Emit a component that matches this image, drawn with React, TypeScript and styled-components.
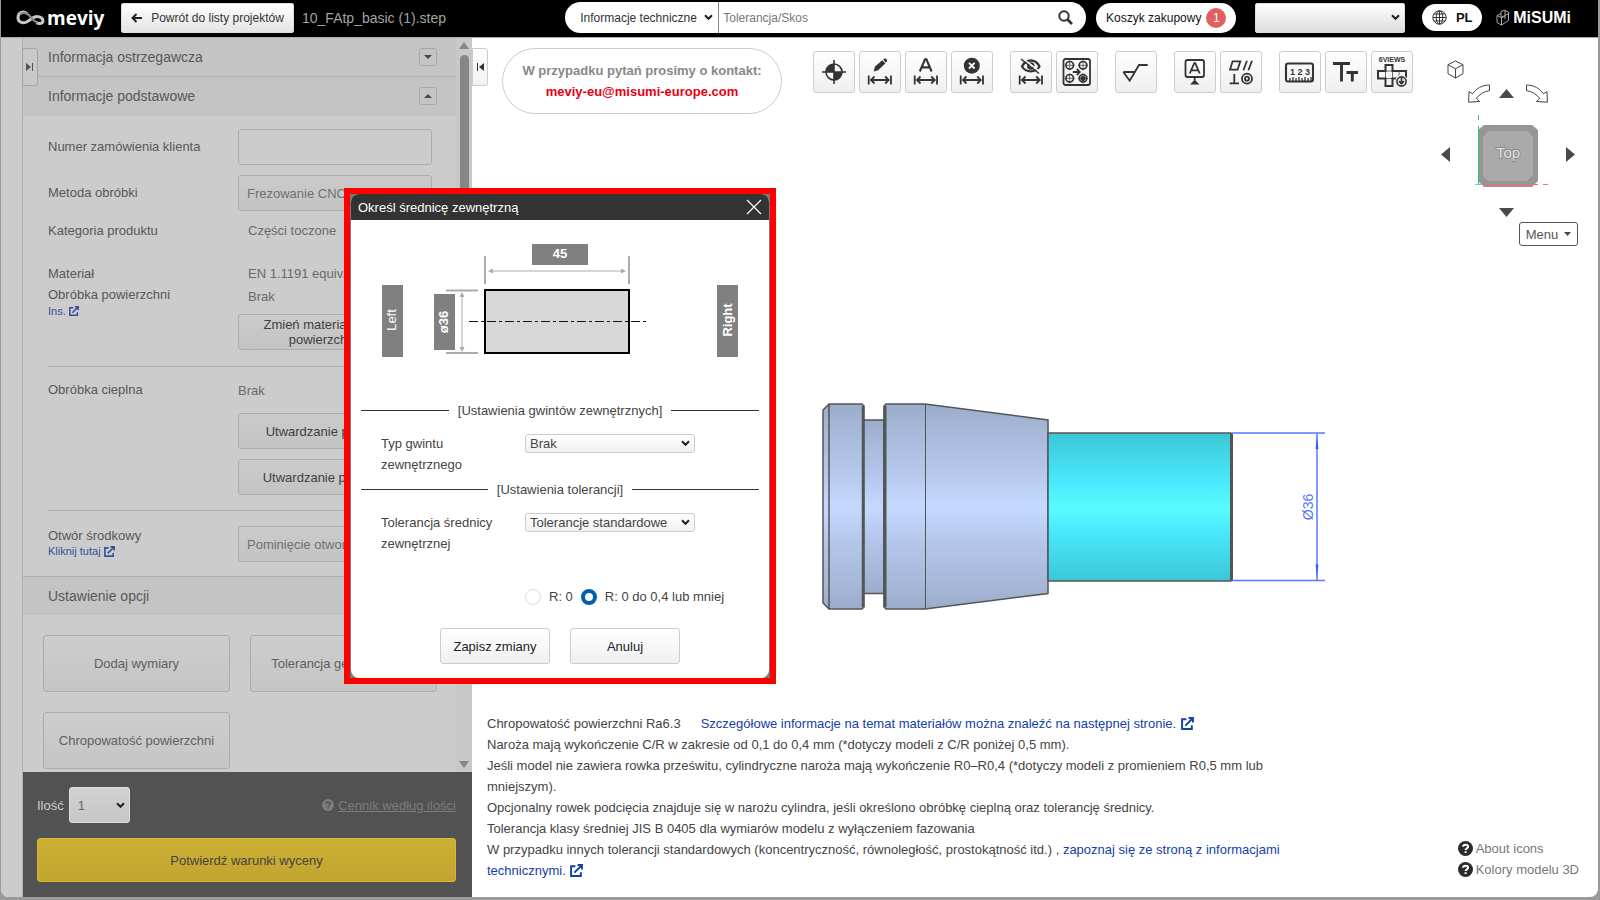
import React from "react";
import styled, { createGlobalStyle, css } from "styled-components";

const Global = createGlobalStyle`
  * { box-sizing: border-box; }
  html, body { margin: 0; padding: 0; }
  body { background: #8e8e8e; font-family: "Liberation Sans", Arial, sans-serif; font-size: 13px; color: #333; }
  button, input, select { font: inherit; color: inherit; margin: 0; }
  p { margin: 0; }
  svg { display: block; flex: none; }
`;

/* ---------- shell ---------- */

const Shell = styled.div`
  position: relative;
  display: flex;
  flex-direction: column;
  height: 100vh;
  padding: 0 2px 3px 1px;
  background: #9a9a9a;
  overflow: hidden;
`;

const Header = styled.header`
  display: flex;
  align-items: center;
  flex: none;
  height: 38px;
  padding: 0 27px 2px 15px;
  background: #000;
  border-bottom: 1px solid #aaa;
`;

const Body = styled.div`
  display: flex;
  flex: 1;
  min-height: 0;
  background: #fff;
  border-radius: 0 0 8px 8px;
  overflow: hidden;
`;

/* ---------- header parts ---------- */

const Brand = styled.a`
  display: flex;
  align-items: center;
  gap: 2px;
  width: 90px;
  color: #fff;
  font: bold 19px/24px "Open Sans", "Noto Sans", sans-serif;
  text-decoration: none;
`;

const BackButton = styled.button`
  display: flex;
  align-items: center;
  justify-content: center;
  gap: 9px;
  width: 173px;
  height: 30px;
  margin-left: 15px;
  padding: 0;
  border: 1px solid #ddd;
  border-radius: 2px;
  background: linear-gradient(#fff, #e4e4e4);
  font-size: 12px;
`;

const FileName = styled.span`
  flex: 1;
  margin-left: 8px;
  color: #a2a2a2;
  font-size: 14px;
`;

const SearchBar = styled.form`
  display: flex;
  align-items: center;
  width: 521px;
  height: 31px;
  border-radius: 16px;
  background: #fff;
  overflow: hidden;
  font-size: 12px;
`;

const SearchInput = styled.input`
  flex: 1;
  min-width: 0;
  height: 31px;
  padding: 0 4px;
  border: 0;
  border-left: 1px solid #888;
  outline: 0;
  background: none;
  &::placeholder { color: #777; opacity: 1; }
`;

const PlainButton = styled.button`
  display: flex;
  align-items: center;
  justify-content: center;
  padding: 0;
  border: 0;
  background: none;
`;

const SearchButton = styled(PlainButton)`
  width: 42px;
  height: 31px;
`;

const CartButton = styled(PlainButton)`
  gap: 5px;
  width: 140px;
  height: 30px;
  margin-left: 10px;
  border-radius: 15px;
  background: #fff;
  color: #111;
  font-size: 12px;
`;

const CountBadge = styled.span`
  width: 20px;
  height: 20px;
  border-radius: 10px;
  background: #e06060;
  color: #fff;
  line-height: 20px;
`;

const AccountSlot = styled.div`
  display: flex;
  margin-left: 19px;
`;

const LangButton = styled(PlainButton)`
  gap: 9px;
  width: 60px;
  height: 27px;
  margin-left: 17px;
  border-radius: 14px;
  background: #fff;
  color: #111;
  font-weight: bold;
`;

const Misumi = styled.a`
  display: flex;
  align-items: center;
  gap: 3px;
  margin-left: 14px;
  color: #fff;
  font-size: 16px;
  font-weight: 900;
  text-decoration: none;
`;

/* ---------- select ---------- */

type Look = "pill" | "top" | "side" | "qty" | "dialog";

const looks = {
  pill: css`width: 153px; height: 31px; padding: 0 15px; border: 0; background: transparent; font-size: 12px;`,
  top: css`width: 150px; height: 30px; border: 1px solid #ddd; border-radius: 2px; background: linear-gradient(#fff, #dcdcdc);`,
  side: css`width: 194px; height: 36px; padding: 0 8px; border: 1px solid #adadad; border-radius: 3px; background: linear-gradient(#cbcbcb, #c3c3c3); color: #707070;`,
  qty: css`width: 61px; height: 36px; padding: 0 8px; border: 1px solid #ddd; border-radius: 3px; background: linear-gradient(#d2d2d2, #c6c6c6); color: #666;`,
  dialog: css`width: 170px; height: 19px; padding: 0 4px; border: 1px solid #ccc; border-radius: 3px; background: linear-gradient(#fff, #f0f0f0); color: #444;`,
};

const SelectWrap = styled.span`
  display: inline-grid;
  align-items: center;
  > * { grid-area: 1 / 1; }
  > svg { justify-self: end; margin-right: 5px; pointer-events: none; }
`;

const SelectBox = styled.select<{ $look: Look }>`
  appearance: none;
  outline: 0;
  ${(p) => looks[p.$look]}
`;

function Select({ look, label, id, options }: { look: Look; label?: string; id?: string; options: string[] }) {
  return (
    <SelectWrap>
      <SelectBox $look={look} aria-label={label} id={id}>
        {options.map((o) => (
          <option key={o}>{o}</option>
        ))}
      </SelectBox>
      <svg width="9" height="7" viewBox="0 0 9 7" fill="none" stroke="#222" strokeWidth="2">
        <path d="M1 1.200 4.500 4.800 8 1.200" />
      </svg>
    </SelectWrap>
  );
}

/* ---------- sidebar ---------- */

const Sidebar = styled.aside`
  display: flex;
  flex: none;
  width: 471px;
  padding-left: 21px;
  background: #ccc;
  color: #585858;
`;

const SidePanel = styled.div`
  position: relative;
  display: flex;
  flex-direction: column;
  flex: 1;
  min-width: 0;
  border-left: 1px solid #b0b0b0;
`;

const SideScroll = styled.div`
  display: flex;
  flex: 1;
  min-height: 0;
  overflow: hidden;
`;

const SideContent = styled.div`
  flex: 1;
  min-width: 0;
`;

const Track = styled.div`
  display: flex;
  flex-direction: column;
  align-items: center;
  justify-content: space-between;
  flex: none;
  width: 16px;
  padding: 4px 0;
  background: #c8c8c8;
`;

const Thumb = styled.div`
  flex: 1;
  width: 9px;
  margin: 6px 0 170px;
  border-radius: 5px;
  background: #868686;
`;

const SectionHead = styled.h2`
  display: flex;
  align-items: center;
  justify-content: space-between;
  height: 39px;
  margin: 0;
  padding: 0 19px 0 25px;
  border-bottom: 1px solid #adadad;
  background: #c4c4c4;
  font-size: 14px;
  font-weight: normal;
  & + & { border-bottom-color: #c4c4c4; }
`;

const ToggleButton = styled(PlainButton)`
  width: 18px;
  height: 18px;
  border: 1px solid #a8a8a8;
  border-radius: 3px;
`;

const Handle = styled(PlainButton)<{ $side: "left" | "right" }>`
  position: absolute;
  top: 10px;
  left: ${(p) => (p.$side === "left" ? "-1px" : "0")};
  width: 16px;
  height: 38px;
  border: 1px solid ${(p) => (p.$side === "left" ? "#a4a4a4" : "#ccc")};
  border-radius: 0 3px 3px 0;
  background: ${(p) => (p.$side === "left" ? "#c8c8c8" : "linear-gradient(#fff, #f2f2f2)")};
`;

const Fields = styled.div<{ $top: number; $bottom: number }>`
  display: grid;
  grid-template-columns: 190px 194px;
  align-items: start;
  margin-left: 25px;
  padding: ${(p) => p.$top}px 0 ${(p) => p.$bottom}px;
  & + & { border-top: 1px solid #adadad; width: 384px; }
`;

const FieldLabel = styled.label<{ $h?: number }>`
  line-height: ${(p) => p.$h ?? 21}px;
`;

const FieldValue = styled.div<{ $h?: number; $indent?: boolean }>`
  padding-left: ${(p) => (p.$indent ? 10 : 0)}px;
  line-height: ${(p) => p.$h ?? 22}px;
  color: #6a6a6a;
  white-space: nowrap;
`;

const FieldName = styled.div<{ $h?: number }>`
  line-height: ${(p) => p.$h ?? 21}px;
`;

const OrderInput = styled.input`
  width: 194px;
  height: 36px;
  margin-bottom: 10px;
  border: 1px solid #adadad;
  border-radius: 3px;
  background: transparent;
`;

const SmallLink = styled.a`
  display: flex;
  align-items: center;
  gap: 3px;
  height: 12px;
  color: #34509a;
  font-size: 11px;
  text-decoration: none;
`;

const SideButton = styled.button`
  width: 194px;
  height: 36px;
  padding: 0;
  border: 1px solid #adadad;
  border-radius: 3px;
  background: linear-gradient(#cbcbcb, #c3c3c3);
  color: #404040;
  line-height: 15px;
`;

const Stack = styled.div<{ $gap?: number }>`
  display: flex;
  flex-direction: column;
  gap: ${(p) => p.$gap ?? 0}px;
`;

const Spacer = styled.div<{ $h: number }>`
  height: ${(p) => p.$h}px;
`;

const OptionsHead = styled(SectionHead)`
  border-top: 1px solid #adadad;
  border-bottom: 0;
`;

const OptionGrid = styled.div`
  display: grid;
  grid-template-columns: 187px 187px;
  gap: 20px;
  padding: 20px 0 0 20px;
`;

const OptionButton = styled.button`
  height: 57px;
  padding: 0;
  border: 1px solid #adadad;
  border-radius: 3px;
  background: linear-gradient(#cdcdcd, #c5c5c5);
  color: #606060;
`;

const SideFooter = styled.div`
  flex: none;
  height: 125px;
  padding: 15px 16px 0 14px;
  background: #525252;
`;

const QtyRow = styled.div`
  display: flex;
  align-items: center;
  gap: 5px;
  margin-bottom: 15px;
  color: #ccc;
`;

const PriceLink = styled.a`
  display: flex;
  align-items: center;
  gap: 4px;
  margin-left: auto;
  color: #7c7c7c;
  text-decoration: none;
  span { text-decoration: underline; }
`;

const QuoteButton = styled.button`
  width: 100%;
  height: 44px;
  border: 1px solid #d8b931;
  border-radius: 3px;
  background: linear-gradient(#ccb033, #c2a431);
  color: #444;
`;

/* ---------- viewer ---------- */

const Viewer = styled.main`
  position: relative;
  display: flex;
  flex-direction: column;
  flex: 1;
  min-width: 0;
`;

const TopRow = styled.div`
  display: flex;
  align-items: flex-start;
  padding: 10px 20px 0 30px;
`;

const Contact = styled.div`
  width: 280px;
  height: 66px;
  padding-top: 11px;
  border: 1px solid #ccc;
  border-radius: 33px;
  color: #888;
  font-weight: bold;
  line-height: 21px;
  text-align: center;
  a { color: #e60012; text-decoration: none; }
`;

const Toolbar = styled.div`
  display: flex;
  gap: 17px;
  margin: 3px 0 0 31px;
`;

const ToolGroup = styled.div`
  display: flex;
  gap: 4px;
`;

const ToolButton = styled(PlainButton)`
  width: 42px;
  height: 42px;
  border: 1px solid #ccc;
  border-radius: 3px;
  background: linear-gradient(#fff, #efefef);
`;

const ViewNav = styled.div`
  display: flex;
  flex-direction: column;
  align-items: flex-start;
  width: 137px;
  margin: 12px 0 0 auto;
`;

const HomeView = styled(PlainButton)`
  margin: 0 0 5px 6px;
`;

const RotateRow = styled.div`
  display: flex;
  align-items: center;
  justify-content: space-between;
  width: 80px;
  margin: 0 0 12px 27px;
  > :nth-child(2) { margin-right: 3px; }
`;

const CubeRow = styled.div`
  display: flex;
  align-items: center;
  justify-content: space-between;
  width: 134px;
  margin-bottom: 15px;
  > :nth-child(2) { margin-left: 8px; }
`;

const DownButton = styled(PlainButton)`
  margin: 0 0 5px 58px;
`;

const MenuButton = styled(PlainButton)`
  align-self: flex-end;
  gap: 6px;
  width: 59px;
  height: 24px;
  border: 1px solid #555;
  border-radius: 3px;
  background: #fff;
  color: #555;
`;

const Stage = styled.div`
  display: flex;
  flex: 1;
  min-height: 0;
  align-items: flex-start;
  padding: 156px 0 0 349px;
`;

const BottomRow = styled.div`
  display: flex;
  align-items: flex-end;
  justify-content: space-between;
  padding: 0 19px 16px 15px;
`;

const Notes = styled.div`
  width: 800px;
  color: #444;
  line-height: 21px;
  a { color: #1440a8; text-decoration: none; }
  a svg { display: inline-block; margin-left: 1px; vertical-align: -2px; }
`;

const RoughLink = styled.a`
  margin-left: 20px;
`;

const HelpList = styled.div`
  display: flex;
  flex-direction: column;
  margin-bottom: 1px;
  a {
    display: flex;
    align-items: center;
    gap: 3px;
    height: 21px;
    color: #777;
    text-decoration: none;
  }
`;

/* ---------- dialog ---------- */

const DialogFrame = styled.section`
  position: absolute;
  top: 188px;
  left: 344px;
  width: 432px;
  border: 6px solid #f00;
  background: #777;
`;

const DialogCard = styled.div`
  margin: 0 1px;
  border-radius: 8px;
  background: #fff;
  overflow: hidden;
`;

const DialogTitle = styled.div`
  display: flex;
  align-items: center;
  justify-content: space-between;
  height: 26px;
  padding: 0 7px;
  background: #333;
  color: #fff;
`;

const DialogBody = styled.div`
  padding: 24px 10px 14px;
  color: #444;
`;

const Diagram = styled.div`
  padding: 0 0 42px 21px;
`;

const Divider = styled.div`
  display: flex;
  align-items: center;
  gap: 9px;
  height: 21px;
  &::before, &::after { content: ""; flex: 1; height: 1px; background: #333; }
`;

const DialogField = styled.div`
  display: grid;
  grid-template-columns: 144px 170px;
  align-items: start;
  padding: 12px 0 4px 20px;
  label { width: 120px; line-height: 21px; }
  > span { margin-top: 1px; }
`;

const RadioRow = styled.div`
  display: flex;
  align-items: center;
  gap: 8px;
  height: 21px;
  margin: 28px 0 21px 164px;
  white-space: nowrap;
  label { display: flex; align-items: center; gap: 8px; }
`;

const Radio = styled.input`
  appearance: none;
  width: 16px;
  height: 16px;
  border: 1px solid #ddd;
  border-radius: 50%;
  background: #fff;
  &:checked { border: 4px solid #0060b0; }
`;

const Actions = styled.div`
  display: flex;
  justify-content: center;
  gap: 20px;
`;

const ActionButton = styled.button`
  width: 110px;
  height: 36px;
  padding: 0;
  border: 1px solid #ccc;
  border-radius: 3px;
  background: linear-gradient(#fff, #f0f0f0);
  color: #222;
`;

/* ---------- small icons ---------- */

const ExtLink = ({ size = 12 }: { size?: number }) => (
  <svg width={size} height={size} viewBox="0 0 12 12" fill="none" stroke="currentColor" strokeWidth="1.800">
    <path d="M5 2H1v9h9V7.500M4 8l6.400-6.400M7 1h4v4" />
  </svg>
);

const Help = ({ color, mark, size = 14 }: { color: string; mark: string; size?: number }) => (
  <svg width={size} height={size} viewBox="0 0 14 14">
    <circle cx="7" cy="7" r="7" fill={color} />
    <path d="M4.800 5.400c0-2.600 4.600-2.600 4.600-.1C9.400 6.900 7.100 6.700 7.100 8.400M7.100 9.600v1.600" fill="none" stroke={mark} strokeWidth="1.900" />
  </svg>
);

const Tri = ({ dir, w, h, color = "#4a4a4a" }: { dir: "up" | "down" | "left" | "right"; w: number; h: number; color?: string }) => {
  const pts = {
    up: `0,${h} ${w},${h} ${w / 2},0`,
    down: `0,0 ${w},0 ${w / 2},${h}`,
    left: `${w},0 ${w},${h} 0,${h / 2}`,
    right: `0,0 0,${h} ${w},${h / 2}`,
  }[dir];
  return (
    <svg width={w} height={h}>
      <polygon points={pts} fill={color} />
    </svg>
  );
};

/* ---------- toolbar icons ---------- */

const DimArrow = () => (
  <path d="M9.700 24.500v9M32 24.500v9M11.500 29h19M15.500 25.500 12 29l3.500 3.500M26.200 25.500 29.700 29l-3.500 3.500" />
);

const toolIcons: { name: string; art: React.ReactNode }[][] = [
  [
    {
      name: "Punkt bazowy",
      art: (
        <>
          <circle cx="21" cy="21" r="8" strokeWidth="1.600" />
          <path d="M21 21V13a8 8 0 0 0-8 8zM21 21v8a8 8 0 0 0 8-8z" fill="#333" stroke="none" />
          <path d="M9 21h24M21 9v24" strokeWidth="1.600" />
        </>
      ),
    },
    {
      name: "Edytuj wymiar",
      art: (
        <>
          <path d="M14.700 20.600l1.300-5 7.300-6.300 3 3.300-7.200 6.600zM24.300 8.500l1.600-1.200q2.400.6 2 3.200l-1.200 1.200z" fill="#333" stroke="none" />
          <DimArrow />
        </>
      ),
    },
    {
      name: "Wymiar automatyczny",
      art: (
        <>
          <path d="M14.800 20.500 20 8.300h1.400l5.200 12.200M16.600 16.400h8" strokeWidth="2.100" />
          <DimArrow />
        </>
      ),
    },
    {
      name: "Usuń wymiar",
      art: (
        <>
          <circle cx="20.800" cy="14.700" r="8" fill="#333" stroke="none" />
          <path d="M18 11.900l5.600 5.600M23.600 11.900 18 17.500" stroke="#fff" />
          <DimArrow />
        </>
      ),
    },
  ],
  [
    {
      name: "Ukryj wymiary",
      art: (
        <>
          <path d="M12 15.500c4-8 13.500-8 17.500 0-4 6.500-13.500 6.500-17.500 0z" strokeWidth="2.300" />
          <circle cx="20.800" cy="15" r="2.600" strokeWidth="2.300" />
          <path d="M12.800 7.400l17.500 13.800" stroke="#f8f8f8" strokeWidth="1.500" />
          <path d="M11 8l18 14.500" strokeWidth="1.500" />
          <DimArrow />
        </>
      ),
    },
    {
      name: "Grupuj otwory",
      art: (
        <>
          <rect x="7.500" y="8" width="26.500" height="26" rx="2" />
          {[[13.7, 14.3], [27, 14.3], [13.7, 27.3], [27, 27.3]].map(([x, y]) => (
            <g key={`${x}-${y}`} strokeWidth="1.700">
              <circle cx={x} cy={y} r="3.800" />
              <path d={`M${x - 5} ${y}h10M${x} ${y - 5}v10`} strokeWidth=".7" />
            </g>
          ))}
          <circle cx="27" cy="27.300" r="1.700" fill="#333" />
          <path d="M16.800 21h6.500M20.800 18l3 3-3 3" />
        </>
      ),
    },
  ],
  [{ name: "Chropowatość", art: <path d="M8.300 21h12.400M8.300 21l6.400 8.700L24 14h8.700" /> }],
  [
    {
      name: "Baza",
      art: (
        <>
          <rect x="11.500" y="9" width="18.500" height="17" rx="2" />
          <path d="M15.800 22.500l4.400-10.300h1.100l4.400 10.300M17.300 19.300h7M20.700 26v4" />
          <path d="M16 33.500l3.500-3.500h2.500l3.500 3.500z" fill="#333" stroke="none" />
        </>
      ),
    },
    {
      name: "Tolerancja geometryczna",
      art: (
        <>
          <path d="M12.600 10.300h7.700l-2.700 8.400H10zM27 9.700l-3.600 9.600M32 9.700l-3.600 9.600M14.300 23v9.300M9.700 32.300h9.300" />
          <circle cx="27" cy="27.700" r="5" />
          <circle cx="27" cy="27.700" r="2" />
        </>
      ),
    },
  ],
  [
    {
      name: "Pomiar",
      art: (
        <>
          <rect x="7" y="12.500" width="27" height="18" rx="2" strokeWidth="2.100" />
          <path d="M11 30v-3M14 30v-4M17 30v-3M20 30v-4M23 30v-3M26 30v-4M29 30v-3M32 30v-4" strokeWidth="1.300" />
          <text x="21" y="23.500" fontSize="9" textAnchor="middle" fill="#333" stroke="none" fontWeight="bold">1 2 3</text>
        </>
      ),
    },
    { name: "Tekst", art: <path d="M8 12.500h17M16.500 12.500v18M21.500 21.500h11.500M27.300 21.500v9" strokeWidth="2.900" /> },
    {
      name: "Sześć widoków",
      art: (
        <>
          <text x="21" y="11" fontSize="7" textAnchor="middle" fill="#333" stroke="none" fontWeight="bold">6VIEWS</text>
          <path d="M14.500 20v-6h7v6H35v7.500H21.500V35h-7v-7.500H7V20z" strokeWidth="2" />
          <path d="M14.500 20h7v7.500h-7zM28 20v5" strokeWidth=".7" />
          <circle cx="30.500" cy="30.500" r="5.500" fill="#f2f2f2" stroke="#f2f2f2" />
          <circle cx="30.500" cy="30.500" r="4.600" strokeWidth="1.600" />
          <path d="M30.500 26.500v6M28 30.200l2.500 2.500 2.500-2.500" strokeWidth="1.700" />
        </>
      ),
    },
  ],
];

/* ---------- drawings ---------- */

const CurvedArrow = ({ flip }: { flip?: boolean }) => (
  <svg width="22" height="19" viewBox="0 0 22 19" fill="#fff" stroke="#444" strokeWidth="1">
    <path
      transform={flip ? "matrix(-1 0 0 1 22 0)" : undefined}
      d="M21.500 1C14 1 8 4.800 4.600 9.800L1 7.600.6 18.200l11-.7-3.300-3.100C11.200 10.300 15.700 7.600 21.500 6.600z"
    />
  </svg>
);

const ViewCube = () => (
  <svg width="76" height="78" viewBox="0 0 76 78">
    <path d="M10 10h48l6 5v51l-6 6H10l-6-6V15z" fill="#969696" />
    <path d="M14 16h40l5 6v38l-6 6H14l-5-5V22z" fill="#aaa" />
    <path d="M4.500 0v5M4.500 11v59" stroke="#2c5" />
    <path d="M8 69.500h56M69 69.500h5" stroke="#f66" />
    <path d="M1 69.500h6" stroke="#7bf" />
    <text x="34" y="43" textAnchor="middle" fontSize="15" fill="#e4e4e4" stroke="#808080" strokeWidth="1.500" paintOrder="stroke">Top</text>
  </svg>
);

const PartModel = () => (
  <svg width="506" height="210" viewBox="821 402 506 210" role="img" aria-label="Model 3D">
    <defs>
      <linearGradient id="steel" x1="0" x2="0" y1="0" y2="1">
        <stop offset="0" stopColor="#9aabcb" />
        <stop offset=".12" stopColor="#a6b8d8" />
        <stop offset=".3" stopColor="#b2c5e8" />
        <stop offset=".5" stopColor="#c5d9ff" />
        <stop offset=".7" stopColor="#b2c5e8" />
        <stop offset=".88" stopColor="#a6b8d8" />
        <stop offset="1" stopColor="#9aabcb" />
      </linearGradient>
      <linearGradient id="selected" x1="0" x2="0" y1="0" y2="1">
        <stop offset="0" stopColor="#3cc6d6" />
        <stop offset=".2" stopColor="#44dcec" />
        <stop offset=".33" stopColor="#4ae8fc" />
        <stop offset=".5" stopColor="#58fcff" />
        <stop offset=".67" stopColor="#4ae8fc" />
        <stop offset=".8" stopColor="#44dcec" />
        <stop offset="1" stopColor="#3cc6d6" />
      </linearGradient>
    </defs>
    <g stroke="#555" strokeWidth="1.500">
      <path d="M863 420h21v173.500h-21z" fill="url(#steel)" />
      <path d="M829 404h33l2 2v201l-2 2h-33l-6-6V410z" fill="url(#steel)" />
      <path d="M829 404v205" />
      <path d="M863 406v201" strokeWidth="2.500" />
      <path d="M886 404h39l123 16v173.500L925 609h-39l-2-2V406z" fill="url(#steel)" />
      <path d="M925.500 404v205" strokeWidth="1" />
      <path d="M885 406v201" strokeWidth="3" />
      <path d="M1048 433h183l1 1v146l-1 1h-183z" fill="url(#selected)" />
      <path d="M1231.500 434v146" strokeWidth="3" />
    </g>
    <g stroke="#5878ff" strokeWidth="1.500" fill="#3c60f0">
      <path d="M1232 433h93M1232 580.500h93M1317 433v147" />
      <path d="M1315.500 449l1.500-13 1.500 13zM1315.500 564.500l1.500 13 1.500-13z" stroke="none" />
    </g>
    <text transform="rotate(-90 1313 507)" x="1313" y="507" textAnchor="middle" fontSize="14" fill="#5878f0">Ø36</text>
  </svg>
);

const Shaft = () => (
  <svg width="358" height="114" viewBox="382 244 358 114" role="img" aria-label="Średnica zewnętrzna">
    <g stroke="#aaa" strokeWidth="1.500" fill="#aaa">
      <path d="M485 256v28M629 256v28M446 290.500h32M446 353h32" strokeWidth="2" />
      <path d="M490 271h134M462 294v56" strokeWidth="1" />
      <path d="M488 271l5-2.500v5zM626 271l-5-2.500v5zM462 292l-2.500 5h5zM462 352l-2.500-5h5z" stroke="none" />
    </g>
    <rect x="485" y="290" width="144" height="63" fill="#d8d8d8" stroke="#000" strokeWidth="2" />
    <path d="M469 321.500h178" stroke="#111" strokeDasharray="9 3 3 3" />
    <g fill="#808080">
      <rect x="532" y="244" width="56" height="21" />
      <rect x="382" y="285" width="21" height="72" />
      <rect x="434" y="294" width="21" height="56" />
      <rect x="717" y="285" width="21" height="72" />
    </g>
    <g fill="#fff" fontSize="13" textAnchor="middle" fontWeight="bold">
      <text x="560" y="258">45</text>
      <text transform="rotate(-90 396 320)" x="396" y="320" fontWeight="normal">Left</text>
      <text transform="rotate(-90 448 322)" x="448" y="322">ø36</text>
      <text transform="rotate(-90 732 320)" x="732" y="320">Right</text>
    </g>
  </svg>
);

/* ---------- page ---------- */

function TopBar() {
  return (
    <Header>
      <Brand href="#">
        <svg width="29" height="16" viewBox="0 0 29 16" fill="none">
          <path d="M11 3.500C7 .5 2 3 2 7.500s4.500 6.500 8.500 4.500C14.500 10 17 6.500 21 6.500c3.500 0 6 2 6 4.200 0 2.600-3.500 3.800-6.500 2" stroke="#c9c5cb" strokeWidth="3" />
          <path d="M4 4.500c3-3 7-1.700 9.500 1.200 2.500 3 5 6.300 8.500 6.800" stroke="#8d8990" strokeWidth="2.200" />
        </svg>
        meviy
      </Brand>
      <BackButton>
        <svg width="11" height="10" viewBox="0 0 11 10" fill="none" stroke="#222" strokeWidth="2">
          <path d="M11 5H2M5.500 1 1.500 5l4 4" />
        </svg>
        Powrót do listy projektów
      </BackButton>
      <FileName>10_FAtp_basic (1).step</FileName>
      <SearchBar>
        <Select look="pill" label="Kategoria wyszukiwania" options={["Informacje techniczne"]} />
        <SearchInput placeholder="Tolerancja/Skos" aria-label="Szukaj" />
        <SearchButton type="button" aria-label="Szukaj">
          <svg width="15" height="15" viewBox="0 0 15 15" fill="none" stroke="#333" strokeWidth="2">
            <circle cx="6" cy="6" r="4.700" />
            <path d="M9.500 9.500 14 14" strokeWidth="2.600" />
          </svg>
        </SearchButton>
      </SearchBar>
      <CartButton>
        Koszyk zakupowy <CountBadge>1</CountBadge>
      </CartButton>
      <AccountSlot>
        <Select look="top" label="Konto" options={[""]} />
      </AccountSlot>
      <LangButton>
        <svg width="15" height="15" viewBox="0 0 15 15" fill="none" stroke="#333" strokeWidth="1">
          <circle cx="7.500" cy="7.500" r="6.700" />
          <ellipse cx="7.500" cy="7.500" rx="3.300" ry="6.700" />
          <path d="M7.500 1v13M1 7.500h13M2 4h11M2 11h11" />
        </svg>
        PL
      </LangButton>
      <Misumi href="#">
        <svg width="14" height="17" viewBox="0 0 14 17" fill="none" stroke="#aaa" strokeWidth="1">
          <path d="M1 6.500 5 4.500v4l4-2v-5L12.500 3v8.500L5.500 16 1 13.500zM1 6.500l4.500 2.300V16M9 6.500l3.500-2M5.500 8.800 9 7v3M5 4.500v-2l4-1.500" />
        </svg>
        MiSUMi
      </Misumi>
    </Header>
  );
}

function Settings() {
  return (
    <Sidebar>
      <SidePanel>
        <SideScroll>
          <SideContent>
            <SectionHead>
              Informacja ostrzegawcza
              <ToggleButton aria-label="Rozwiń"><Tri dir="down" w={8} h={4} /></ToggleButton>
            </SectionHead>
            <SectionHead>
              Informacje podstawowe
              <ToggleButton aria-label="Zwiń"><Tri dir="up" w={8} h={4} /></ToggleButton>
            </SectionHead>
            <Fields $top={13} $bottom={16}>
              <FieldLabel htmlFor="order" $h={36}>Numer zamówienia klienta</FieldLabel>
              <OrderInput id="order" />
              <FieldLabel htmlFor="method" $h={36}>Metoda obróbki</FieldLabel>
              <Select look="side" id="method" options={["Frezowanie CNC/toczenie"]} />
              <FieldName $h={39}>Kategoria produktu</FieldName>
              <FieldValue $indent $h={39}>Części toczone</FieldValue>
              <Stack>
                <Spacer $h={13} />
                <FieldName>Materiał</FieldName>
                <FieldName>Obróbka powierzchni</FieldName>
                <SmallLink href="#">Ins.<ExtLink size={10} /></SmallLink>
              </Stack>
              <Stack>
                <Spacer $h={13} />
                <FieldValue $indent>EN 1.1191 equiv.</FieldValue>
                <FieldValue $indent $h={24}>Brak</FieldValue>
                <Spacer $h={5} />
                <SideButton>Zmień materiał i obróbkę powierzchniową</SideButton>
              </Stack>
            </Fields>
            <Fields $top={12} $bottom={15}>
              <FieldName>Obróbka cieplna</FieldName>
              <Stack $gap={10}>
                <FieldValue $h={24}>Brak</FieldValue>
                <SideButton>Utwardzanie przelotowe</SideButton>
                <SideButton>Utwardzanie powierzchni</SideButton>
              </Stack>
            </Fields>
            <Fields $top={15} $bottom={14}>
              <Stack>
                <FieldLabel htmlFor="center" $h={19}>Otwór środkowy</FieldLabel>
                <SmallLink href="#">Kliknij tutaj <ExtLink size={11} /></SmallLink>
              </Stack>
              <Select look="side" id="center" options={["Pominięcie otworu"]} />
            </Fields>
            <OptionsHead>Ustawienie opcji</OptionsHead>
            <OptionGrid>
              <OptionButton>Dodaj wymiary</OptionButton>
              <OptionButton>Tolerancja geometryczna</OptionButton>
              <OptionButton>Chropowatość powierzchni</OptionButton>
            </OptionGrid>
          </SideContent>
          <Track>
            <Tri dir="up" w={10} h={7} color="#868686" />
            <Thumb />
            <Tri dir="down" w={10} h={7} color="#868686" />
          </Track>
        </SideScroll>
        <SideFooter>
          <QtyRow>
            <label htmlFor="qty">Ilość</label>
            <Select look="qty" id="qty" options={["1"]} />
            <PriceLink href="#">
              <Help color="#7c7c7c" mark="#525252" size={12} />
              <span>Cennik według ilości</span>
            </PriceLink>
          </QtyRow>
          <QuoteButton>Potwierdź warunki wyceny</QuoteButton>
        </SideFooter>
        <Handle $side="left" aria-label="Rozwiń panel">
          <svg width="8" height="8" viewBox="0 0 8 8"><path d="M0 0l5 4-5 4zM6 0h1v8H6z" fill="#555" /></svg>
        </Handle>
      </SidePanel>
    </Sidebar>
  );
}

function ViewerPane() {
  return (
    <Viewer>
      <TopRow>
        <Contact>
          W przypadku pytań prosimy o kontakt:
          <br />
          <a href="mailto:meviy-eu@misumi-europe.com">meviy-eu@misumi-europe.com</a>
        </Contact>
        <Toolbar>
          {toolIcons.map((group, i) => (
            <ToolGroup key={i}>
              {group.map((t) => (
                <ToolButton key={t.name} aria-label={t.name}>
                  <svg width="42" height="42" viewBox="0 0 42 42" fill="none" stroke="#333" strokeWidth="1.800">{t.art}</svg>
                </ToolButton>
              ))}
            </ToolGroup>
          ))}
        </Toolbar>
        <ViewNav>
          <HomeView aria-label="Widok izometryczny">
            <svg width="17" height="19" viewBox="0 0 17 19" fill="none" stroke="#444" strokeWidth="1">
              <path d="M8.500 1 16 4.700v9L8.500 18 1 13.700v-9zM1 4.700l7.500 4 7.500-4M8.500 8.700V18" />
            </svg>
          </HomeView>
          <RotateRow>
            <PlainButton aria-label="Obróć w lewo"><CurvedArrow /></PlainButton>
            <PlainButton aria-label="W górę"><Tri dir="up" w={15} h={9} /></PlainButton>
            <PlainButton aria-label="Obróć w prawo"><CurvedArrow flip /></PlainButton>
          </RotateRow>
          <CubeRow>
            <PlainButton aria-label="W lewo"><Tri dir="left" w={9} h={15} /></PlainButton>
            <ViewCube />
            <PlainButton aria-label="W prawo"><Tri dir="right" w={9} h={15} /></PlainButton>
          </CubeRow>
          <DownButton aria-label="W dół"><Tri dir="down" w={15} h={9} /></DownButton>
          <MenuButton>Menu <Tri dir="down" w={7} h={4} /></MenuButton>
        </ViewNav>
      </TopRow>
      <Stage><PartModel /></Stage>
      <BottomRow>
        <Notes>
          <p>
            Chropowatość powierzchni Ra6.3
            <RoughLink href="#">Szczegółowe informacje na temat materiałów można znaleźć na następnej stronie. <ExtLink size={13} /></RoughLink>
          </p>
          <p>Naroża mają wykończenie C/R w zakresie od 0,1 do 0,4 mm (*dotyczy modeli z C/R poniżej 0,5 mm).</p>
          <p>Jeśli model nie zawiera rowka prześwitu, cylindryczne naroża mają wykończenie R0–R0,4 (*dotyczy modeli z promieniem R0,5 mm lub mniejszym).</p>
          <p>Opcjonalny rowek podcięcia znajduje się w narożu cylindra, jeśli określono obróbkę cieplną oraz tolerancję średnicy.</p>
          <p>Tolerancja klasy średniej JIS B 0405 dla wymiarów modelu z wyłączeniem fazowania</p>
          <p>
            W przypadku innych tolerancji standardowych (koncentryczność, równoległość, prostokątność itd.) ,{" "}
            <a href="#">zapoznaj się ze stroną z informacjami technicznymi. <ExtLink size={13} /></a>
          </p>
        </Notes>
        <HelpList>
          <a href="#"><Help color="#2b2b2b" mark="#fff" size={15} />About icons</a>
          <a href="#"><Help color="#2b2b2b" mark="#fff" size={15} />Kolory modelu 3D</a>
        </HelpList>
      </BottomRow>
      <Handle $side="right" aria-label="Zwiń panel">
        <svg width="8" height="8" viewBox="0 0 8 8"><path d="M8 0 3 4l5 4zM1 0h1v8H1z" fill="#333" /></svg>
      </Handle>
    </Viewer>
  );
}

function DiameterDialog() {
  return (
    <DialogFrame role="dialog" aria-label="Określ średnicę zewnętrzną">
      <DialogCard>
        <DialogTitle>
          Określ średnicę zewnętrzną
          <PlainButton aria-label="Zamknij">
            <svg width="16" height="16" viewBox="0 0 16 16" stroke="#fff" strokeWidth="1.200"><path d="M1 1l14 14M15 1 1 15" /></svg>
          </PlainButton>
        </DialogTitle>
        <DialogBody>
          <Diagram><Shaft /></Diagram>
          <Divider>[Ustawienia gwintów zewnętrznych]</Divider>
          <DialogField>
            <label htmlFor="thread">Typ gwintu zewnętrznego</label>
            <Select look="dialog" id="thread" options={["Brak"]} />
          </DialogField>
          <Divider>[Ustawienia tolerancji]</Divider>
          <DialogField>
            <label htmlFor="tol">Tolerancja średnicy zewnętrznej</label>
            <Select look="dialog" id="tol" options={["Tolerancje standardowe"]} />
          </DialogField>
          <RadioRow>
            <label><Radio type="radio" name="r" />R: 0</label>
            <label><Radio type="radio" name="r" defaultChecked />R: 0 do 0,4 lub mniej</label>
          </RadioRow>
          <Actions>
            <ActionButton>Zapisz zmiany</ActionButton>
            <ActionButton>Anuluj</ActionButton>
          </Actions>
        </DialogBody>
      </DialogCard>
    </DialogFrame>
  );
}

export default function App() {
  return (
    <>
      <Global />
      <Shell>
        <TopBar />
        <Body>
          <Settings />
          <ViewerPane />
        </Body>
        <DiameterDialog />
      </Shell>
    </>
  );
}
